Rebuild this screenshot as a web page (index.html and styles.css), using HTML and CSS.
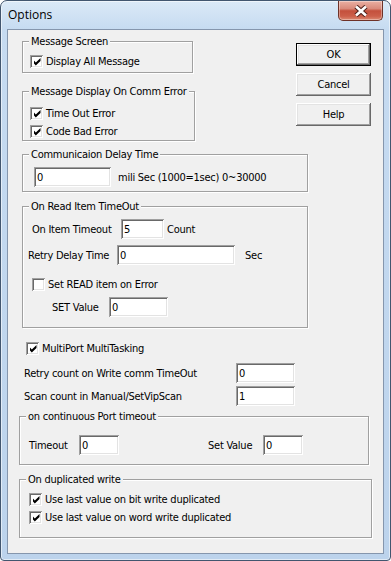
FILE: index.html
```html
<!DOCTYPE html>
<html lang="en">

<head>
    <meta charset="UTF-8">
    <title>Options</title>
    <link rel="stylesheet" href="styles.css">
</head>

<body>
    <div class="window">
        <!-- Title bar -->
        <div class="titlebar">
            <span class="title">Options</span>
            <div class="close">
                <svg width="16" height="12" viewBox="0 0 16 12">
                    <path d="M3 1.5 L13 10.5 M13 1.5 L3 10.5" stroke="#4b1e18" stroke-width="4.6" />
                    <path d="M3 1.5 L13 10.5 M13 1.5 L3 10.5" stroke="#fff" stroke-width="2.6" />
                </svg>
            </div>
        </div>

        <div class="client">
            <!-- Top: message groups and buttons -->
            <div class="top">
                <div class="top-left">
                    <div class="group g-msg">
                        <span class="legend">Message Screen</span>
                        <div class="check c-msg"><span class="box on"></span>Display All Message</div>
                    </div>

                    <div class="group g-err">
                        <span class="legend">Message Display On Comm Error</span>
                        <div class="check c-err1"><span class="box on"></span>Time Out Error</div>
                        <div class="check c-err2"><span class="box on"></span>Code Bad Error</div>
                    </div>
                </div>

                <div class="buttons">
                    <button class="btn default">OK</button>
                    <button class="btn">Cancel</button>
                    <button class="btn">Help</button>
                </div>
            </div>

            <!-- Delay -->
            <div class="group g-delay">
                <span class="legend">Communicaion Delay Time</span>
                <div class="row r-delay">
                    <input class="field w77" type="text" value="0">
                    <span class="after a-delay">mili Sec (1000=1sec) 0~30000</span>
                </div>
            </div>

            <!-- Read item timeout -->
            <div class="group g-read">
                <span class="legend">On Read Item TimeOut</span>
                <div class="row r-item">
                    <span class="label l89">On Item Timeout</span>
                    <input class="field w43" type="text" value="5">
                    <span class="after a-count">Count</span>
                </div>
                <div class="row r-retry">
                    <span class="label l89">Retry Delay Time</span>
                    <input class="field w118" type="text" value="0">
                    <span class="after a-sec">Sec</span>
                </div>
                <div class="check c-read"><span class="box"></span>Set READ item on Error</div>
                <div class="row r-set">
                    <span class="label l57">SET Value</span>
                    <input class="field w59" type="text" value="0">
                </div>
            </div>

            <div class="check c-multi"><span class="box on"></span>MultiPort MultiTasking</div>

            <div class="row r-write">
                <span class="label l212">Retry count on Write comm TimeOut</span>
                <input class="field w59" type="text" value="0">
            </div>
            <div class="row r-scan">
                <span class="label l212">Scan count in Manual/SetVipScan</span>
                <input class="field w59" type="text" value="1">
            </div>

            <!-- Port timeout -->
            <div class="group g-port">
                <span class="legend">on continuous Port timeout</span>
                <div class="row r-port">
                    <span class="label l50">Timeout</span>
                    <input class="field w40" type="text" value="0">
                    <span class="label l55 setval">Set Value</span>
                    <input class="field w40" type="text" value="0">
                </div>
            </div>

            <!-- Duplicated write -->
            <div class="group g-dup">
                <span class="legend">On duplicated write</span>
                <div class="check c-dup1"><span class="box on"></span>Use last value on bit write duplicated</div>
                <div class="check c-dup2"><span class="box on"></span>Use last value on word write duplicated</div>
            </div>
        </div>
    </div>
</body>

</html>
```

FILE: styles.css
```css
/* Base */
body {
    margin: 0;
    background-color: #fff;
}

/* Window frame */
.window {
    width: 391px;
    height: 561px;
    box-sizing: border-box;
    border: 1px solid #42566f;
    border-radius: 7px 7px 4px 4px;
    background: linear-gradient(to bottom, #dbe9f7 0, #c6dbf1 28px, #bcd3ec 100%);
    box-shadow: inset 0 0 0 1px rgba(255, 255, 255, 0.55);
    padding: 0 6px 6px;
    display: flex;
    flex-direction: column;
    font-family: "DejaVu Sans Condensed", "DejaVu Sans", sans-serif;
    font-stretch: condensed;
    font-size: 11px;
    letter-spacing: -0.25px;
    color: #000;
}

.titlebar {
    height: 28px;
    display: flex;
    justify-content: space-between;
    align-items: flex-start;
}

.title {
    font-family: "Open Sans", sans-serif;
    font-stretch: normal;
    font-size: 12px;
    letter-spacing: 0;
    line-height: 16px;
    margin: 6px 0 0 1px;
}

.close {
    width: 45px;
    height: 20px;
    box-sizing: border-box;
    margin-right: 1px;
    border: 1px solid #6e3228;
    border-top: none;
    border-radius: 0 0 5px 5px;
    background: linear-gradient(to bottom, #eab0a3 0, #d98a7b 40%, #c4503c 52%, #cc5f4a 80%, #dc8a72 100%);
    box-shadow: inset 0 0 0 1px rgba(255, 255, 255, 0.35);
    display: flex;
    align-items: center;
    justify-content: center;
}

/* Client area */
.client {
    flex: 1;
    background-color: #f0f0f0;
    border: 1px solid #8596ad;
}

.top {
    display: flex;
    align-items: flex-start;
}

.top-left {
    margin: 11px 0 0 14px;
    width: 173px;
}

.buttons {
    margin: 13px 0 0 101px;
    display: flex;
    flex-direction: column;
    gap: 7px;
}

.btn {
    width: 75px;
    height: 23px;
    padding: 0;
    border: none;
    background-color: #f0f0f0;
    font: inherit;
    letter-spacing: inherit;
    color: #000;
    box-shadow: inset -1px -1px #696969, inset 1px 1px #fff, inset -2px -2px #a0a0a0, inset 2px 2px #e3e3e3;
}

.btn.default {
    box-shadow: inset 0 0 0 1px #000, inset -2px -2px #696969, inset 2px 2px #fff, inset -3px -3px #a0a0a0, inset 3px 3px #e3e3e3;
}

/* Group boxes */
.group {
    box-sizing: border-box;
    border: 1px solid #a0a0a0;
    box-shadow: 1px 1px 0 #fff, inset 1px 1px 0 #fff;
}

.legend {
    display: table;
    margin: -7px 0 0 6px;
    padding: 0 2px;
    line-height: 13px;
    white-space: nowrap;
    background-color: #f0f0f0;
}

.g-msg {
    width: 171px;
    height: 32px;
}

.g-err {
    width: 173px;
    height: 50px;
    margin-top: 18px;
}

.g-delay {
    width: 286px;
    height: 38px;
    margin: 13px 0 0 14px;
}

.g-read {
    width: 286px;
    height: 122px;
    margin: 14px 0 0 14px;
}

.g-port {
    width: 350px;
    height: 49px;
    margin: 10px 0 0 11px;
}

.g-dup {
    width: 353px;
    height: 59px;
    margin: 14px 0 0 11px;
}

/* Checkboxes */
.check {
    display: flex;
    align-items: center;
    height: 13px;
    white-space: nowrap;
}

.box {
    width: 13px;
    height: 13px;
    flex: none;
    box-sizing: border-box;
    margin-right: 3px;
    background-color: #fff;
    box-shadow: inset 1px 1px #a0a0a0, inset -1px -1px #fff, inset 2px 2px #696969, inset -2px -2px #e3e3e3;
    display: flex;
    align-items: center;
    justify-content: center;
}

.box.on::after {
    content: "";
    width: 7px;
    height: 8px;
    margin: 1px 0 0 1px;
    background: #000;
    clip-path: polygon(0 25%, 33% 56%, 100% 0, 100% 38%, 33% 94%, 0 62%);
}

.c-msg {
    margin: 7px 0 0 7px;
}

.c-err1 {
    margin: 9px 0 0 7px;
}

.c-err2 {
    margin: 5px 0 0 7px;
}

.c-read {
    margin: 13px 0 0 9px;
}

.c-multi {
    margin: 14px 0 0 18px;
}

.c-dup1 {
    margin: 7px 0 0 9px;
}

.c-dup2 {
    margin: 5px 0 0 9px;
}

/* Edit rows */
.row {
    display: flex;
    align-items: center;
    white-space: nowrap;
}

.field {
    height: 20px;
    box-sizing: border-box;
    padding: 0 0 0 3px;
    border: none;
    outline: none;
    background-color: #fff;
    font: inherit;
    letter-spacing: inherit;
    color: #000;
    box-shadow: inset 1px 1px #a0a0a0, inset -1px -1px #fff, inset 2px 2px #696969, inset -2px -2px #e3e3e3;
}

.w40 { width: 40px; }
.w43 { width: 43px; }
.w59 { width: 59px; }
.w77 { width: 77px; }
.w118 { width: 118px; }

.label { flex: none; }
.l50 { width: 50px; }
.l55 { width: 55px; }
.l57 { width: 57px; }
.l89 { width: 89px; }
.l212 { width: 212px; }

.r-delay { margin: 6px 0 0 11px; }
.a-delay { margin-left: 7px; }

.r-item { margin: 6px 0 0 9px; }
.a-count { margin-left: 3px; }

.r-retry { margin: 6px 0 0 5px; }
.a-sec { margin-left: 10px; }

.r-set { margin: 6px 0 0 29px; }

.r-write { margin: 8px 0 0 16px; }
.r-scan { margin: 3px 0 0 16px; }

.r-port { margin: 12px 0 0 9px; }
.setval { margin-left: 89px; }
```
